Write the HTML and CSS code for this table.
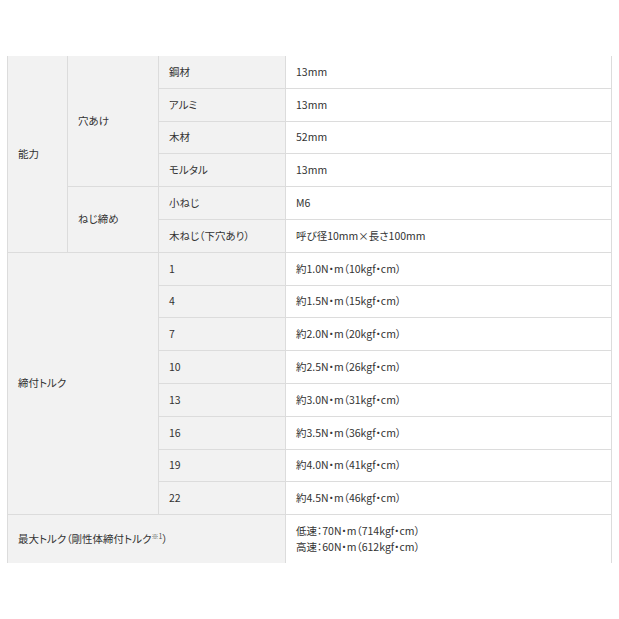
FILE: index.html
```html
<!DOCTYPE html>
<html lang="ja">
<head>
<meta charset="utf-8">
<link rel="stylesheet" href="styles.css">
</head>
<body>
<table class="spec">
  <colgroup>
    <col class="c1"><col class="c2"><col class="c3"><col class="c4">
  </colgroup>
  <tbody>
    <tr class="first">
      <th rowspan="6">能力</th>
      <th rowspan="4">穴あけ</th>
      <th>鋼材</th>
      <td>13mm</td>
    </tr>
    <tr><th>アルミ</th><td>13mm</td></tr>
    <tr><th>木材</th><td>52mm</td></tr>
    <tr><th>モルタル</th><td>13mm</td></tr>
    <tr>
      <th rowspan="2">ねじ締め</th>
      <th>小ねじ</th>
      <td>M6</td>
    </tr>
    <tr><th>木ねじ（下穴あり）</th><td>呼び径10mm×長さ100mm</td></tr>
    <tr>
      <th rowspan="8" colspan="2">締付トルク</th>
      <th>1</th>
      <td>約1.0N・m（10kgf・cm）</td>
    </tr>
    <tr><th>4</th><td>約1.5N・m（15kgf・cm）</td></tr>
    <tr><th>7</th><td>約2.0N・m（20kgf・cm）</td></tr>
    <tr><th>10</th><td>約2.5N・m（26kgf・cm）</td></tr>
    <tr><th>13</th><td>約3.0N・m（31kgf・cm）</td></tr>
    <tr><th>16</th><td>約3.5N・m（36kgf・cm）</td></tr>
    <tr><th>19</th><td>約4.0N・m（41kgf・cm）</td></tr>
    <tr><th>22</th><td>約4.5N・m（46kgf・cm）</td></tr>
    <tr class="last">
      <th colspan="3">最大トルク（剛性体締付トルク<sup>※1</sup>）</th>
      <td>低速：70N・m（714kgf・cm）<br>高速：60N・m（612kgf・cm）</td>
    </tr>
  </tbody>
</table>
</body>
</html>
```

FILE: styles.css
```css
html, body {
  margin: 0;
  padding: 0;
  background: #fff;
}
body {
  padding: 56px 0 0 7px;
  font-family: "Noto Sans CJK JP", "Noto Sans", sans-serif;
  font-size: 10.5px;
  font-feature-settings: "palt";
  color: #333;
}
.spec {
  border-collapse: collapse;
  table-layout: fixed;
  width: 604px;
}
.c1 { width: 60px; }
.c2 { width: 91px; }
.c3 { width: 127px; }
.c4 { width: 326px; }
.spec th, .spec td {
  border: 1px solid #dcdcdc;
  padding: 0 10px;
  height: 31.8px;
  text-align: left;
  font-weight: normal;
  line-height: 16px;
  vertical-align: middle;
}
.spec th {
  background: #f2f2f2;
}
.spec td {
  background: #fff;
}
.spec tr.first th, .spec tr.first td {
  border-top: none;
}
.spec tr.last th, .spec tr.last td {
  border-bottom: none;
  height: 32px;
}
.spec tr.last td {
  padding-top: 8px;
  padding-bottom: 8px;
}
.spec sup {
  font-size: 7px;
  line-height: 0;
  vertical-align: 4px;
  color: #555;
}
```
